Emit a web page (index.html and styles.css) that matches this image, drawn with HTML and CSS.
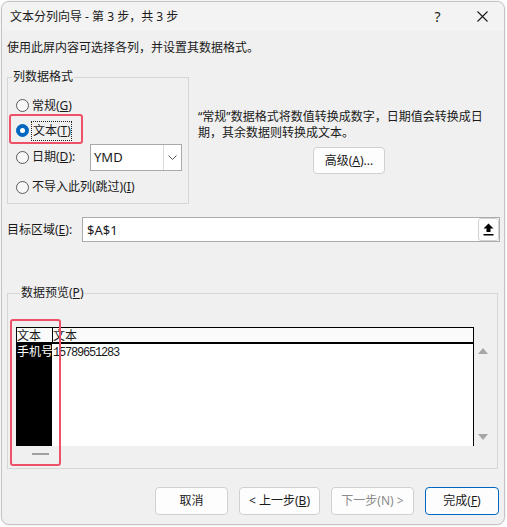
FILE: index.html
```html
<!DOCTYPE html>
<html lang="zh-CN">
<head>
<meta charset="utf-8">
<title>文本分列向导</title>
<link rel="stylesheet" href="styles.css">
</head>
<body>
<div class="dialog">
  <div class="titlebar">
    <span class="title">文本分列向导 - 第 3 步，共 3 步</span>
    <span class="tb-btn help">?</span>
    <span class="tb-btn close">
      <svg width="11" height="11" viewBox="0 0 11 11"><path d="M0.5 0.5 L10.5 10.5 M10.5 0.5 L0.5 10.5" stroke="#1a1a1a" stroke-width="1.1" fill="none"/></svg>
    </span>
  </div>
  <div class="content">
    <p class="intro">使用此屏内容可选择各列，并设置其数据格式。</p>
    <div class="top-row">
      <fieldset class="group format">
        <legend>列数据格式</legend>
        <div class="radio-row r1"><span class="radio"></span><span class="rlabel">常规(<u>G</u>)</span></div>
        <div class="radio-row r2"><span class="radio checked"></span><span class="rlabel focus">文本(<u>T</u>)</span><span class="highlight hl-radio"></span></div>
        <div class="radio-row r3"><span class="radio"></span><span class="rlabel">日期(<u>D</u>):</span>
          <div class="combo"><span class="combo-text">YMD</span><span class="combo-btn"><svg width="9" height="5" viewBox="0 0 9 5"><path d="M0.5 0.5 L4.5 4.5 L8.5 0.5" stroke="#5a5a5a" fill="none"/></svg></span></div>
        </div>
        <div class="radio-row r4"><span class="radio"></span><span class="rlabel">不导入此列(跳过)(<u>I</u>)</span></div>
      </fieldset>
      <div class="side">
        <p class="desc"><span class="q">“</span>常规<span class="q">”</span>数据格式将数值转换成数字，日期值会转换成日期，其余数据则转换成文本。</p>
        <button class="btn adv">高级(<u>A</u>)...</button>
      </div>
    </div>
    <div class="target">
      <span class="target-label">目标区域(<u>E</u>):</span>
      <div class="input">
        <span class="input-text">$A$1</span>
        <span class="pick-btn"><svg width="11" height="13" viewBox="0 0 11 13"><path d="M5.5 0.5 L10.5 5.5 L7.5 5.5 L7.5 9 L3.5 9 L3.5 5.5 L0.5 5.5 Z" fill="#000"/><rect x="0.5" y="11" width="10" height="1.5" fill="#000"/></svg></span>
      </div>
    </div>
    <fieldset class="group preview">
      <legend>数据预览(<u>P</u>)</legend>
      <div class="preview-body">
        <div class="grid">
          <div class="grid-head">
            <span class="hcell c1">文本</span>
            <span class="hcell c2">文本</span>
          </div>
          <div class="grid-body">
            <span class="bcell c1 sel">手机号</span>
            <span class="bcell c2"><span class="mono">15789651283</span></span>
          </div>
          <span class="highlight hl-col"></span>
        </div>
        <div class="vscroll">
          <svg width="10" height="6" viewBox="0 0 10 6"><path d="M5 0 L10 6 L0 6 Z" fill="#a6a6a6"/></svg>
          <svg width="10" height="6" viewBox="0 0 10 6"><path d="M0 0 L10 0 L5 6 Z" fill="#a6a6a6"/></svg>
        </div>
      </div>
      <div class="hthumb"></div>
    </fieldset>
    <div class="buttons">
      <button class="btn b-cancel">取消</button>
      <button class="btn b-prev">&lt; 上一步(<u>B</u>)</button>
      <button class="btn b-next disabled">下一步(N) &gt;</button>
      <button class="btn b-finish primary">完成(<u>F</u>)</button>
    </div>
  </div>
</div>
</body>
</html>
```
FILE: styles.css
```css
* { box-sizing: border-box; }
html, body { margin: 0; padding: 0; }
body {
  width: 507px;
  height: 527px;
  background: #ffffff;
  font-family: "Noto Sans", "Noto Sans CJK SC", sans-serif;
  font-size: 12px;
  color: #1a1a1a;
  overflow: hidden;
}
u { text-decoration: underline; text-underline-offset: 1px; }

.dialog {
  margin: 1px 0 0 1px;
  width: 504px;
  height: 524px;
  border: 1px solid #c4c4c4;
  border-radius: 8px;
  background: #f0f0f0;
  overflow: hidden;
  box-shadow: 0 0 2px rgba(0,0,0,0.15);
}

.titlebar {
  height: 29px;
  background: #f3f3f3;
  display: flex;
  align-items: center;
  padding-left: 8px;
}
.title { flex: 1; line-height: 16px; padding-top: 1px; }
.tb-btn { display: flex; align-items: center; justify-content: center; height: 29px; }
.help { width: 47px; font-size: 14px; color: #1a1a1a; }
.close { width: 43px; }

.content { padding: 9px 4px 0 5px; }
.intro { margin: 0; line-height: 16px; }

.top-row { display: flex; align-items: flex-start; margin-top: 13px; }

.group {
  margin: 0;
  padding: 0;
  border: 1px solid #d6d6d6;
  min-width: 0;
}
.group legend {
  margin-left: 4px;
  padding: 0 1px;
  line-height: 16px;
}

.format { width: 182px; padding-top: 8px; }
.radio-row {
  position: relative;
  display: flex;
  align-items: center;
  padding-left: 8px;
}
.r1 { height: 25px; }
.r2 { height: 25px; }
.r3 { height: 28px; padding-right: 6px; }
.r4 { height: 32px; }
.radio {
  width: 13px;
  height: 13px;
  border: 1px solid #5a5a5a;
  border-radius: 50%;
  background: #f7f7f7;
  flex: none;
  display: flex;
  align-items: center;
  justify-content: center;
}
.radio.checked { border-color: #0067c0; background: #0067c0; }
.radio.checked::after {
  content: "";
  width: 5px;
  height: 5px;
  border-radius: 50%;
  background: #ffffff;
}
.rlabel { margin-left: 3px; line-height: 16px; white-space: nowrap; }
.rlabel.focus {
  margin-left: 2px;
  padding: 1px 0 1px 1px;
  border: 1px dotted #222;
  line-height: 16px;
}
.combo {
  margin-left: auto;
  width: 92px;
  height: 27px;
  border: 1px solid #a9a9a9;
  background: #ffffff;
  display: flex;
  align-items: center;
}
.combo-text { flex: 1; padding-left: 3px; font-size: 13px; }
.combo-btn {
  width: 18px;
  height: 25px;
  border-left: 1px solid #dadada;
  display: flex;
  align-items: center;
  justify-content: center;
}

.highlight {
  position: absolute;
  border: 2px solid #ee5068;
  border-radius: 3px;
  pointer-events: none;
}
.hl-radio { left: 1px; top: -4px; width: 74px; height: 30px; }

.side {
  flex: 1;
  padding-left: 9px;
  display: flex;
  flex-direction: column;
  align-items: center;
}
.desc {
  margin: 40px 0 0;
  width: 292px;
  align-self: flex-start;
  line-height: 16px;
}
.q { font-family: "Noto Sans", sans-serif; }

.btn {
  height: 28px;
  border: 1px solid #d0d0d0;
  border-radius: 4px;
  background: #fdfdfd;
  font: inherit;
  color: #1a1a1a;
  padding: 0;
  line-height: 16px;
}
.adv { margin-top: 6px; width: 72px; height: 27px; }

.target {
  display: flex;
  align-items: center;
  margin-top: 13px;
  height: 25px;
}
.target-label { width: 75px; flex: none; line-height: 16px; }
.input {
  flex: 1;
  height: 25px;
  border: 1px solid #ababab;
  background: #ffffff;
  display: flex;
  align-items: center;
  padding-left: 4px;
}
.input-text { flex: 1; font-size: 13px; }
.pick-btn {
  width: 21px;
  height: 23px;
  border: 1px solid #d2d2d2;
  border-radius: 3px;
  background: #fdfdfd;
  display: flex;
  align-items: center;
  justify-content: center;
}

.preview {
  margin-top: 43px;
  width: 491px;
  padding: 26px 0 13px 8px;
}
.preview-body { display: flex; }
.grid {
  position: relative;
  width: 458px;
  height: 119px;
  border: 1px solid #000;
  border-bottom: none;
  background: #ffffff;
  display: flex;
  flex-direction: column;
}
.grid-head {
  display: flex;
  height: 16px;
  border-bottom: 2px solid #000;
  background: #fafafa;
}
.hcell { line-height: 15px; white-space: nowrap; }
.grid-head .c1 { width: 36px; border-right: 1px solid #000; }
.grid-head .c2 { flex: 1; }
.grid-body { flex: 1; display: flex; }
.bcell { line-height: 16px; white-space: nowrap; }
.grid-body .c1 { width: 35px; }
.grid-body .c2 { flex: 1; padding-left: 1px; }
.sel { background: #000; color: #fff; overflow: hidden; }
.mono {
  font-family: "Liberation Mono", monospace;
  font-size: 12px;
  letter-spacing: -1.2px;
}
.hl-col { left: -7px; top: -9px; width: 51px; height: 147px; }

.vscroll {
  width: 10px;
  margin-left: 4px;
  display: flex;
  flex-direction: column;
  justify-content: space-between;
  padding: 21px 0 6px;
}
.vscroll svg { display: block; }
.hthumb {
  margin: 7px 0 0 16px;
  width: 17px;
  height: 2px;
  background: #a0a0a0;
}

.buttons {
  display: flex;
  justify-content: flex-end;
  gap: 11px;
  margin-top: 18px;
  padding-right: 1px;
}
.b-cancel { width: 73px; }
.b-prev { width: 81px; }
.b-next { width: 83px; }
.b-finish { width: 74px; }
.disabled { color: #8c8c8c; }
.primary { border-color: #0067c0; }
```
